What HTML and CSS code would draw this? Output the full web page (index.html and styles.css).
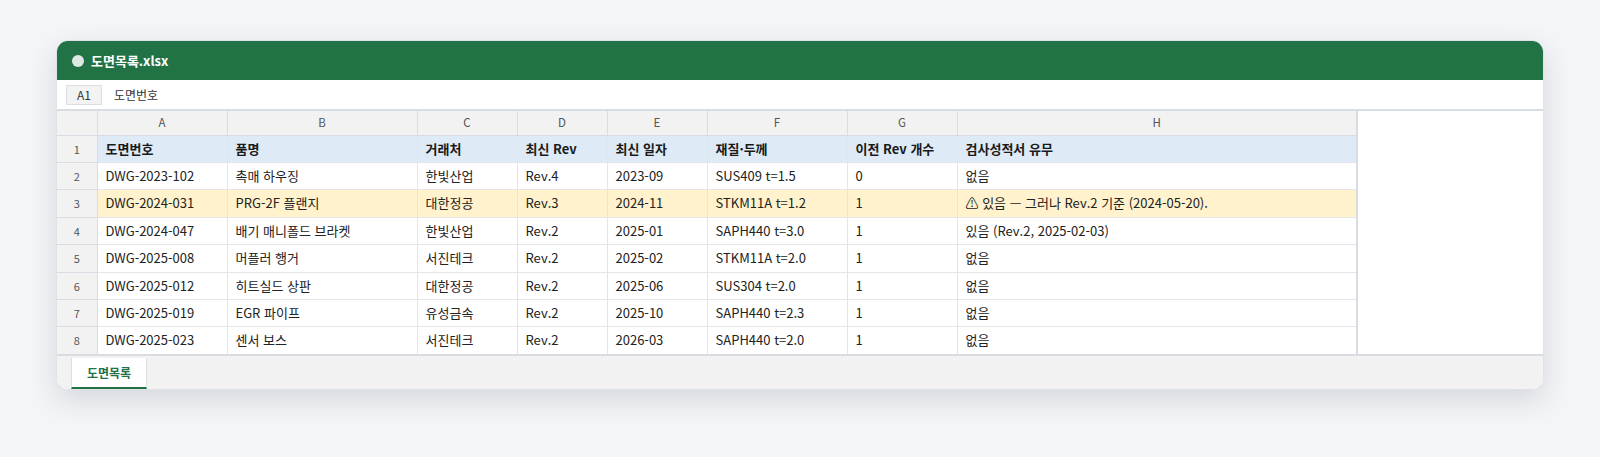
FILE: index.html
```html
<!DOCTYPE html>
<html lang="ko">
<head>
<meta charset="utf-8">
<title>도면목록.xlsx</title>
<link rel="stylesheet" href="styles.css">
</head>
<body>
<div class="window">
  <div class="titlebar">
    <span class="dot"></span>
    <span class="title">도면목록.xlsx</span>
  </div>
  <div class="formulabar">
    <span class="cellref">A1</span>
    <span class="formula">도면번호</span>
  </div>
  <div class="gridwrap">
    <table class="grid">
      <colgroup>
        <col class="c-rh"><col class="c-a"><col class="c-b"><col class="c-c"><col class="c-d"><col class="c-e"><col class="c-f"><col class="c-g"><col class="c-h">
      </colgroup>
      <thead>
        <tr class="colhdr">
          <th class="corner"></th><th>A</th><th>B</th><th>C</th><th>D</th><th>E</th><th>F</th><th>G</th><th>H</th>
        </tr>
      </thead>
      <tbody>
        <tr class="hdr">
          <th class="rh">1</th><td>도면번호</td><td>품명</td><td>거래처</td><td>최신 Rev</td><td>최신 일자</td><td>재질·두께</td><td>이전 Rev 개수</td><td>검사성적서 유무</td>
        </tr>
        <tr>
          <th class="rh">2</th><td>DWG-2023-102</td><td>촉매 하우징</td><td>한빛산업</td><td>Rev.4</td><td>2023-09</td><td>SUS409 t=1.5</td><td>0</td><td>없음</td>
        </tr>
        <tr class="warn">
          <th class="rh">3</th><td>DWG-2024-031</td><td>PRG-2F 플랜지</td><td>대한정공</td><td>Rev.3</td><td>2024-11</td><td>STKM11A t=1.2</td><td>1</td><td>⚠ 있음 — 그러나 Rev.2 기준 (2024-05-20).</td>
        </tr>
        <tr>
          <th class="rh">4</th><td>DWG-2024-047</td><td>배기 매니폴드 브라켓</td><td>한빛산업</td><td>Rev.2</td><td>2025-01</td><td>SAPH440 t=3.0</td><td>1</td><td>있음 (Rev.2, 2025-02-03)</td>
        </tr>
        <tr>
          <th class="rh">5</th><td>DWG-2025-008</td><td>머플러 행거</td><td>서진테크</td><td>Rev.2</td><td>2025-02</td><td>STKM11A t=2.0</td><td>1</td><td>없음</td>
        </tr>
        <tr>
          <th class="rh">6</th><td>DWG-2025-012</td><td>히트실드 상판</td><td>대한정공</td><td>Rev.2</td><td>2025-06</td><td>SUS304 t=2.0</td><td>1</td><td>없음</td>
        </tr>
        <tr>
          <th class="rh">7</th><td>DWG-2025-019</td><td>EGR 파이프</td><td>유성금속</td><td>Rev.2</td><td>2025-10</td><td>SAPH440 t=2.3</td><td>1</td><td>없음</td>
        </tr>
        <tr>
          <th class="rh">8</th><td>DWG-2025-023</td><td>센서 보스</td><td>서진테크</td><td>Rev.2</td><td>2026-03</td><td>SAPH440 t=2.0</td><td>1</td><td>없음</td>
        </tr>
      </tbody>
    </table>
  </div>
  <div class="tabbar">
    <span class="tab">도면목록</span>
  </div>
</div>
</body>
</html>
```

FILE: styles.css
```css
* { box-sizing: border-box; }

html, body {
  margin: 0;
  padding: 0;
}

body {
  background: #f4f5f8;
  padding: 40px 56px;
  font-family: "Noto Sans CJK KR", "Noto Sans", sans-serif;
  color: #222;
}

.window {
  background: #fff;
  border: 1px solid #dfe2e7;
  border-radius: 12px;
  overflow: hidden;
  box-shadow: 0 10px 28px rgba(30, 40, 60, 0.14);
}

.titlebar {
  height: 39px;
  background: #217346;
  display: flex;
  align-items: center;
  padding-left: 15px;
  gap: 7px;
}

.dot {
  width: 12px;
  height: 12px;
  border-radius: 50%;
  background: #dfe9e3;
}

.title {
  color: #fff;
  font-weight: 700;
  font-size: 13px;
  line-height: 1;
}

.formulabar {
  height: 31px;
  display: flex;
  align-items: center;
  padding-left: 9px;
  gap: 12px;
  border-bottom: 2px solid #d8dde3;
}

.cellref {
  width: 36px;
  height: 20px;
  background: #f3f3f3;
  border: 1px solid #dcdfe3;
  font-size: 12px;
  line-height: 18px;
  text-align: center;
  color: #333;
}

.formula {
  font-size: 12px;
  color: #333;
}

.gridwrap {
  background: #fff;
}

.grid {
  border-collapse: collapse;
  table-layout: fixed;
  width: 1300px;
  font-size: 13px;
}

.c-rh { width: 40px; }
.c-a { width: 130px; }
.c-b { width: 190px; }
.c-c { width: 100px; }
.c-d { width: 90px; }
.c-e { width: 100px; }
.c-f { width: 140px; }
.c-g { width: 110px; }
.c-h { width: 400px; }

.grid td, .grid th {
  border: 1px solid #e2e6eb;
  padding: 4px 8px;
  line-height: 18.4px;
  white-space: nowrap;
  overflow: hidden;
  text-align: left;
  font-weight: 400;
}

.grid tr:first-child th, .grid tr:first-child td { border-top: 0; }
.grid th:first-child { border-left: 0; }

.colhdr th {
  background: #f2f2f2;
  font-size: 11.5px;
  color: #555;
  text-align: center;
  line-height: 15.6px;
  border-color: #d9dde3;
}

.grid th.rh {
  background: #f2f2f2;
  font-size: 11px;
  color: #555;
  text-align: center;
  border-color: #d9dde3;
}

.grid tbody tr:last-child td, .grid tbody tr:last-child th { border-bottom: 0; }

.grid td:last-child, .grid th:last-child { border-right: 2px solid #d9dde3; }

.hdr td {
  background: #deeaf6;
  font-weight: 700;
  color: #1a1a1a;
}

.warn td {
  background: #fff2cc;
}

.tabbar {
  height: 35px;
  background: #f2f2f2;
  border-top: 2px solid #d9dde3;
  padding-left: 14px;
  padding-top: 2px;
  display: flex;
  align-items: stretch;
}

.tab {
  background: #fff;
  border-left: 1px solid #dcdfe3;
  border-right: 1px solid #dcdfe3;
  border-bottom: 2px solid #217346;
  color: #217346;
  font-weight: 700;
  font-size: 12px;
  padding: 0 15px;
  display: flex;
  align-items: center;
}
```
